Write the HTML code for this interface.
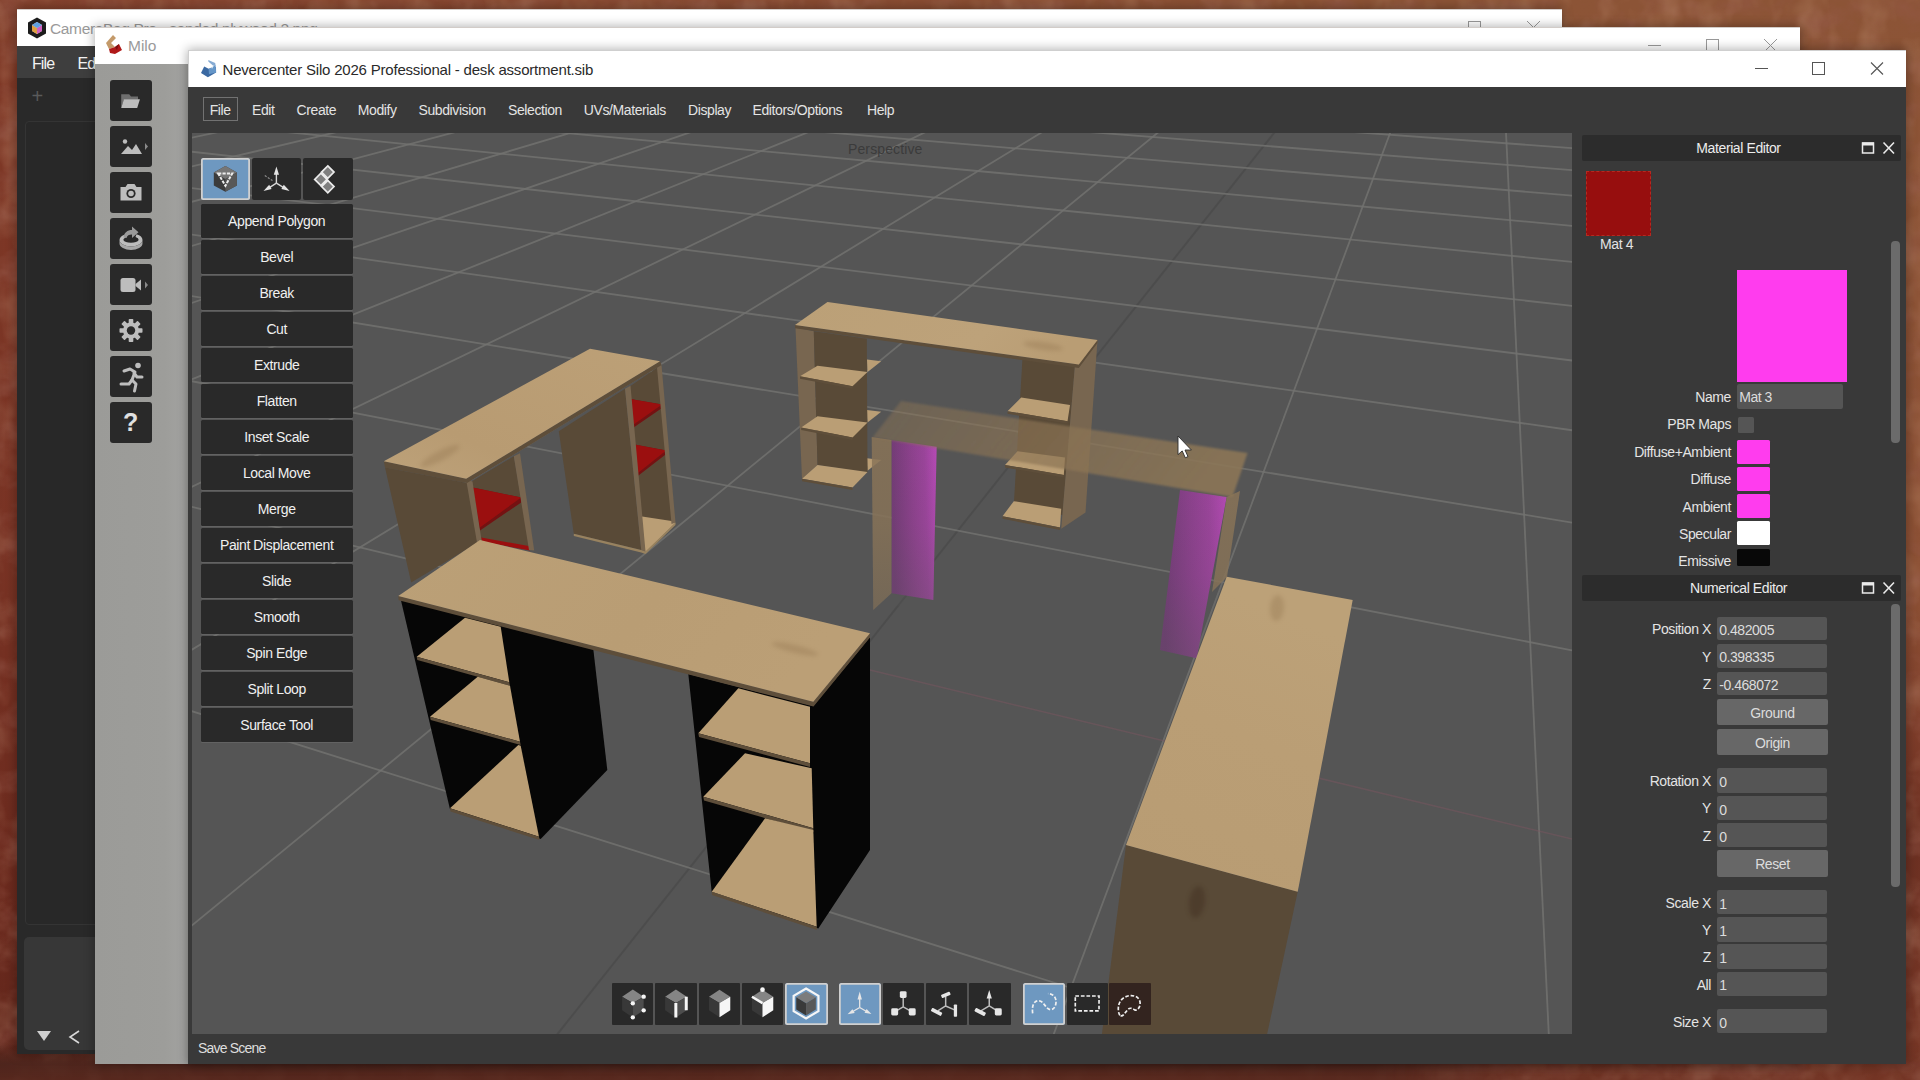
<!DOCTYPE html>
<html><head><meta charset="utf-8"><title>Nevercenter Silo 2026 Professional - desk assortment.sib</title>
<style>

html,body{margin:0;padding:0;}
body{width:1920px;height:1080px;overflow:hidden;position:relative;background:#8c4a31;font-family:"Liberation Sans",sans-serif;}
.abs{position:absolute;}
#desk{position:absolute;left:0;top:0;width:1920px;height:1080px;}
.win{position:absolute;box-shadow:0 0 10px 1px rgba(0,0,0,0.30);}
.tb{position:absolute;left:0;top:0;right:0;background:#fff;box-shadow:inset 0 1px 0 #d2ccc8;}
.t{position:absolute;white-space:pre;line-height:1;}
.silo .t{color:#e4e4e4;font-size:14px;letter-spacing:-0.4px;}
.tool{position:absolute;left:12.7px;width:152px;height:34px;background:#292929;border-radius:1.5px;color:#f0f0f0;font-size:14px;letter-spacing:-0.4px;text-align:center;line-height:34.5px;box-shadow:0 1px 0 rgba(110,110,110,0.55);}
.fld{position:absolute;background:#555555;border-radius:2px;color:#dcdcdc;font-size:14px;letter-spacing:-0.45px;line-height:26.5px;padding-left:2.5px;box-sizing:border-box;}
.btn{position:absolute;background:#676767;border-radius:2px;color:#dcdcdc;font-size:14px;letter-spacing:-0.4px;text-align:center;}
.lbl{position:absolute;text-align:right;color:#e4e4e4;font-size:14px;letter-spacing:-0.4px;white-space:pre;line-height:1;}
.hdr{position:absolute;background:#2c2c2c;border-radius:2px;}
.mb{position:absolute;left:15px;width:41.5px;height:41px;background:#292929;border-radius:3px;}
.bb{position:absolute;top:933px;height:42px;background:#292929;border-radius:1px;}
.sel{background:#6e98c0 !important;box-shadow:inset 0 0 0 1.8px #d0d0d0;border-radius:2.5px !important;}

</style></head><body>
<svg id="desk" width="1920" height="1080" viewBox="0 0 1920 1080">
<defs>
<linearGradient id="dgR" x1="0" y1="0" x2="0" y2="1"><stop offset="0" stop-color="#8c5436"/><stop offset="0.55" stop-color="#8c5034"/><stop offset="0.68" stop-color="#7d3c29"/><stop offset="0.78" stop-color="#6c3022"/><stop offset="1" stop-color="#783726"/></linearGradient>
<linearGradient id="dgL" x1="0" y1="0" x2="0" y2="1"><stop offset="0" stop-color="#84422d"/><stop offset="0.08" stop-color="#7e3826"/><stop offset="0.5" stop-color="#783324"/><stop offset="0.85" stop-color="#6a291d"/><stop offset="1" stop-color="#60261b"/></linearGradient>
<linearGradient id="dgLR" x1="0" y1="0" x2="1" y2="0"><stop offset="0" stop-color="#fff" stop-opacity="1"/><stop offset="0.12" stop-color="#fff" stop-opacity="0.85"/><stop offset="0.8" stop-color="#fff" stop-opacity="0"/></linearGradient>
<linearGradient id="dgBm" x1="0" y1="0" x2="1" y2="0"><stop offset="0" stop-color="#fff" stop-opacity="1"/><stop offset="0.72" stop-color="#fff" stop-opacity="1"/><stop offset="0.8" stop-color="#fff" stop-opacity="0.35"/><stop offset="1" stop-color="#fff" stop-opacity="0.1"/></linearGradient><mask id="mB"><rect width="1920" height="1080" fill="url(#dgBm)"/></mask><mask id="mL"><rect width="1920" height="1080" fill="url(#dgLR)"/></mask>
<linearGradient id="dgB" x1="0" y1="0" x2="0" y2="1"><stop offset="0" stop-color="#4e261d" stop-opacity="0"/><stop offset="0.965" stop-color="#4e261d" stop-opacity="0"/><stop offset="0.985" stop-color="#4c251d" stop-opacity="0.9"/><stop offset="1" stop-color="#55281e" stop-opacity="0.85"/></linearGradient>
<filter id="noise" x="0" y="0" width="100%" height="100%"><feTurbulence type="fractalNoise" baseFrequency="0.025 0.035" numOctaves="4" seed="11"/><feColorMatrix type="matrix" values="0 0 0 0 0.30  0 0 0 0 0.10  0 0 0 0 0.07  2.4 0 0 0 -1.05"/></filter>
<filter id="noise2" x="0" y="0" width="100%" height="100%"><feTurbulence type="fractalNoise" baseFrequency="0.035 0.025" numOctaves="3" seed="3"/><feColorMatrix type="matrix" values="0 0 0 0 0.62  0 0 0 0 0.36  0 0 0 0 0.23  0 2.4 0 0 -1.05"/></filter>
</defs>
<rect width="1920" height="1080" fill="url(#dgR)"/>
<rect width="1920" height="1080" fill="url(#dgL)" mask="url(#mL)"/>
<rect width="1920" height="1080" filter="url(#noise)" opacity="0.5"/>
<rect width="1920" height="1080" filter="url(#noise2)" opacity="0.25"/>
<rect width="1920" height="1080" fill="url(#dgB)" mask="url(#mB)"/>
</svg><div class="win" style="left:17px;top:9px;width:1545px;height:1045px;background:#2b2b2b;overflow:hidden"><div class="tb" style="height:37px"></div><svg class="abs" style="left:10px;top:8px" width="20" height="22" viewBox="0 0 20 22"><polygon points="10,0.5 19,5.5 19,16.5 10,21.5 1,16.5 1,5.5" fill="#1c1c1c"/><polygon points="10,5 15,8 15,14 10,17 5,14 5,8" fill="#d8d0c8"/><polygon points="10,11 15,8 15,14 10,17" fill="#d060c0"/><polygon points="10,11 5,8 5,14 10,17" fill="#e0a040"/><polygon points="10,5 15,8 10,11 5,8" fill="#60a0e0"/></svg><div class="t" style="left:33px;top:11.5px;font-size:15.5px;color:#9a9a9a;letter-spacing:-0.35px">CameraBag Pro - sanded plywood 2.png</div><div class="abs" style="left:0;top:37px;right:0;height:32px;background:#3e3e3e"></div><div class="abs" style="left:0;top:69px;right:0;bottom:0;background:#292929"></div><div class="t" style="left:15px;top:46.5px;font-size:16px;color:#f2f2f2;letter-spacing:-0.9px">File</div><div class="t" style="left:60.5px;top:46.5px;font-size:16px;color:#f2f2f2;letter-spacing:-0.9px">Edit</div><div class="t" style="left:14.5px;top:77px;font-size:20px;color:#5a5a5a">+</div><div class="abs" style="left:8px;top:112px;width:200px;height:802px;border:1px solid #343434;border-radius:4px;background:#282828"></div><div class="abs" style="left:7px;top:927.5px;width:200px;height:113.5px;border-radius:5px;background:#373737"></div><svg class="abs" style="left:19px;top:1019.5px" width="50" height="16" viewBox="0 0 50 16"><polygon points="1,2 15,2 8,12" fill="#d0d0d0"/><polyline points="43,2 34,8 43,14" fill="none" stroke="#d8d8d8" stroke-width="1.6"/></svg><svg class="abs" style="left:1440px;top:8px" width="100" height="20" viewBox="0 0 100 20"><rect x="11.5" y="4.5" width="12" height="12" fill="none" stroke="#999" stroke-width="1"/><path d="M70 4 L83 17 M83 4 L70 17" stroke="#999" stroke-width="1"/></svg></div><div class="win" style="left:95px;top:27px;width:1705px;height:1037px;background:#a2a2a2"><div class="tb" style="height:37px"></div><svg class="abs" style="left:10px;top:8px" width="18" height="20" viewBox="0 0 18 20"><polygon points="8,0 11,3 6,8 10,12 4,14 1,8" fill="#c49a6a"/><polygon points="4,14 10,12 14,9 17,15 10,19 5,18" fill="#b01818"/><polygon points="10,12 14,9 12,15" fill="#7a0f0f"/></svg><div class="t" style="left:33px;top:11px;font-size:15.5px;color:#9a9a9a">Milo</div><svg class="abs" style="left:1545px;top:8px" width="150" height="22" viewBox="0 0 150 22"><path d="M8 10.5 H21" stroke="#999" stroke-width="1"/><rect x="66.5" y="4.5" width="12" height="12" fill="none" stroke="#999" stroke-width="1"/><path d="M124 4 L137 17 M137 4 L124 17" stroke="#999" stroke-width="1"/></svg><div class="abs" style="left:0;top:37px;right:0;bottom:0;background:linear-gradient(90deg,#9b9b98,#9d9d9a 70px,#a2a2a0 88px,#9e9e9c 93px)"></div><div class="mb" style="top:52.50px"><svg width="42" height="41" viewBox="0 0 42 41"><path d="M11.2 14.2 h8 l1.8 2.3 h7 v3 h-14 l-2.8 8.6 z" fill="#6e6e6e"/><path d="M13.9 19.2 h16 l-2.7 8.9 h-16 z" fill="#bdbdbd"/></svg></div><div class="mb" style="top:98.75px"><svg width="42" height="41" viewBox="0 0 42 41"><path d="M11 28 l7 -8 4 4 4 -6 6 10 z" fill="#bdbdbd"/><circle cx="15" cy="15.5" r="2.2" fill="#bdbdbd"/><polygon points="35,17 38,20.5 35,24" fill="#8a8a8a"/></svg></div><div class="mb" style="top:145.00px"><svg width="42" height="41" viewBox="0 0 42 41"><path d="M10.5 15 h5 l2 -3 h7 l2 3 h5 v13.5 h-21 z" fill="#bdbdbd"/><circle cx="21" cy="21.5" r="4.6" fill="#2a2a2a"/><circle cx="21" cy="21.5" r="2.8" fill="#bdbdbd"/></svg></div><div class="mb" style="top:190.50px"><svg width="42" height="41" viewBox="0 0 42 41"><path d="M9.5 22 a11.5 6.5 0 0 0 23 0 a11.5 6.5 0 0 0 -6 -5.7 l-1 2.6 a8 3.8 0 0 1 3.2 3.1 a8 3.8 0 0 1 -15.4 0 a8 3.8 0 0 1 2.2 -2.6 l-1.2 -2.6 a11.5 6.5 0 0 0 -4.8 5.2 z" fill="#bdbdbd"/><path d="M9.5 22 v3.5 a11.5 6.5 0 0 0 23 0 v-3.5 a11.5 6.5 0 0 1 -23 0 z" fill="#a8a8a8"/><path d="M13.5 19.5 c0.5 -5 4 -7.5 8.5 -7.5 v-3.5 l6.5 5.8 -6.5 5.8 v-3.6 c-3 0 -5 1 -5.5 3.6 z" fill="#9a9a9a"/></svg></div><div class="mb" style="top:237.25px"><svg width="42" height="41" viewBox="0 0 42 41"><rect x="10.5" y="14" width="15" height="14" rx="2.5" fill="#bdbdbd"/><polygon points="25.5,20 31,15.5 31,26.5 25.5,22" fill="#bdbdbd"/><polygon points="35,17.5 38,21 35,24.5" fill="#8a8a8a"/></svg></div><div class="mb" style="top:283.00px"><svg width="42" height="41" viewBox="0 0 42 41"><g transform="translate(21 20.5)" fill="#bdbdbd"><circle r="8" /><g id="teeth"><rect x="-2.3" y="-11.5" width="4.6" height="23" rx="0.8"/><rect x="-2.3" y="-11.5" width="4.6" height="23" rx="0.8" transform="rotate(45)"/><rect x="-2.3" y="-11.5" width="4.6" height="23" rx="0.8" transform="rotate(90)"/><rect x="-2.3" y="-11.5" width="4.6" height="23" rx="0.8" transform="rotate(135)"/></g><circle r="4.2" fill="#2a2a2a"/></g></svg></div><div class="mb" style="top:328.75px"><svg width="42" height="41" viewBox="0 0 42 41"><g fill="none" stroke="#bdbdbd" stroke-width="3" stroke-linecap="round" stroke-linejoin="round"><path d="M14 15 l6 -2 5 3 -3 8 4 4 -1.5 7"/><path d="M22 24 l-3 4 h-8"/><path d="M24 17 l3 4 h5"/></g><circle cx="28" cy="9.5" r="2.8" fill="#bdbdbd"/></svg></div><div class="mb" style="top:375.00px"><div class="t" style="left:0;width:41.5px;text-align:center;top:8px;font-size:25px;font-weight:bold;color:#e0e0e0">?</div></div></div><div class="win silo" style="left:188px;top:50px;width:1718px;height:1014px;background:#393939;overflow:hidden"><div class="tb" style="height:37px;box-shadow:inset 1px 1px 0 #cfcfcf"></div><svg class="abs" style="left:11px;top:9px" width="20" height="20" viewBox="0 0 20 20"><polygon points="5.2,7.5 9.6,9.7 17,8 17.1,13.5 8.9,18.2 2,14.1" fill="#3b69a2"/><polygon points="9.6,9.9 16.6,6.3 17.1,13.5 10,15.2" fill="#6596c8"/><polygon points="9.3,0.9 16.2,4 16.7,7.2 13.9,6.4 9.3,2.6" fill="#86abd3"/><polygon points="12.4,8.6 13.6,8 14,9 12.8,9.6" fill="#e8eef5"/></svg><div class="t" style="left:34.5px;top:12.0px;font-size:15px;color:#2a2a2a;letter-spacing:-0.2px">Nevercenter Silo 2026 Professional - desk assortment.sib</div><svg class="abs" style="left:1560px;top:8px" width="150" height="22" viewBox="0 0 150 22"><path d="M7 10.5 H20" stroke="#555" stroke-width="1"/><rect x="64.5" y="4.5" width="12" height="12" fill="none" stroke="#555" stroke-width="1"/><path d="M123 4.5 L135 16.5 M135 4.5 L123 16.5" stroke="#555" stroke-width="1.1"/></svg><div class="abs" style="left:15px;top:47px;width:34.5px;height:23.5px;border:1px solid #727272;box-sizing:border-box"></div><div class="t" style="left:21.7px;top:53.0px;">File</div><div class="t" style="left:64.0px;top:53.0px;">Edit</div><div class="t" style="left:108.6px;top:53.0px;">Create</div><div class="t" style="left:169.8px;top:53.0px;">Modify</div><div class="t" style="left:230.5px;top:53.0px;">Subdivision</div><div class="t" style="left:320.0px;top:53.0px;">Selection</div><div class="t" style="left:395.8px;top:53.0px;">UVs/Materials</div><div class="t" style="left:500.0px;top:53.0px;">Display</div><div class="t" style="left:564.5px;top:53.0px;">Editors/Options</div><div class="t" style="left:679.0px;top:53.0px;">Help</div><svg class="abs" style="left:4px;top:83px" width="1380" height="901" viewBox="192 133 1380 901"><defs><filter id="blur1" x="-5%" y="-20%" width="110%" height="140%"><feGaussianBlur stdDeviation="1.1"/></filter><filter id="blur2" x="-50%" y="-50%" width="200%" height="200%"><feGaussianBlur stdDeviation="2.2"/></filter>
<linearGradient id="vbg" x1="0" y1="0" x2="0.3" y2="1"><stop offset="0" stop-color="#6e6e6e"/><stop offset="0.07" stop-color="#626262"/><stop offset="0.18" stop-color="#595959"/><stop offset="0.35" stop-color="#565656"/><stop offset="1" stop-color="#545454"/></linearGradient>
<linearGradient id="wood1" x1="0" y1="1" x2="1" y2="0"><stop offset="0" stop-color="#bda27a"/><stop offset="0.3" stop-color="#b89b72"/><stop offset="1" stop-color="#bca077"/></linearGradient>
<linearGradient id="wood2" x1="0" y1="0" x2="1" y2="0.2"><stop offset="0" stop-color="#bba077"/><stop offset="0.7" stop-color="#bda27a"/><stop offset="1" stop-color="#b99d74"/></linearGradient>
<linearGradient id="wood3" x1="0.3" y1="0" x2="0" y2="1"><stop offset="0" stop-color="#bca178"/><stop offset="0.4" stop-color="#ba9e75"/><stop offset="1" stop-color="#b89c73"/></linearGradient>
<linearGradient id="wood4" x1="0" y1="0" x2="1" y2="0.3"><stop offset="0" stop-color="#bba077"/><stop offset="0.6" stop-color="#b99d74"/><stop offset="1" stop-color="#bb9f76"/></linearGradient>
<linearGradient id="mag1" x1="0" y1="0.1" x2="1" y2="0"><stop offset="0" stop-color="#733c76"/><stop offset="0.45" stop-color="#8d418d"/><stop offset="0.72" stop-color="#9a449a"/><stop offset="1" stop-color="#b64ab6"/></linearGradient>
<linearGradient id="mag2" x1="0" y1="0.1" x2="1" y2="0"><stop offset="0" stop-color="#703c74"/><stop offset="0.45" stop-color="#8a418b"/><stop offset="0.72" stop-color="#984498"/><stop offset="1" stop-color="#b24ab2"/></linearGradient>
<linearGradient id="ghost" x1="0" y1="0" x2="1" y2="0.2"><stop offset="0" stop-color="#8c7454" stop-opacity="0.42"/><stop offset="0.4" stop-color="#8c7454" stop-opacity="0.62"/><stop offset="1" stop-color="#8c7656" stop-opacity="0.88"/></linearGradient><linearGradient id="fade" x1="0" y1="0" x2="0" y2="1"><stop offset="0" stop-color="#555" stop-opacity="0"/><stop offset="0.5" stop-color="#555" stop-opacity="0.05"/><stop offset="1" stop-color="#555" stop-opacity="0.3"/></linearGradient>
</defs><rect x="192" y="133" width="1380" height="901" fill="#555555"/><line x1="551.8" y1="-75.2" x2="-2500.8" y2="142.6" stroke="#727270" stroke-opacity="0.85" stroke-width="1.80"/><line x1="574.7" y1="-74.6" x2="-2498.9" y2="152.1" stroke="#727270" stroke-opacity="0.85" stroke-width="1.80"/><line x1="597.8" y1="-74.0" x2="-2496.9" y2="162.2" stroke="#727270" stroke-opacity="0.85" stroke-width="1.80"/><line x1="621.3" y1="-73.4" x2="-2494.7" y2="173.0" stroke="#727270" stroke-opacity="0.85" stroke-width="1.80"/><line x1="645.2" y1="-72.8" x2="-2492.4" y2="184.6" stroke="#727270" stroke-opacity="0.85" stroke-width="1.80"/><line x1="669.4" y1="-72.2" x2="-2489.9" y2="197.1" stroke="#727270" stroke-opacity="0.85" stroke-width="1.80"/><line x1="694.0" y1="-71.5" x2="-2487.2" y2="210.4" stroke="#727270" stroke-opacity="0.85" stroke-width="1.80"/><line x1="719.0" y1="-70.9" x2="-2484.3" y2="224.9" stroke="#727270" stroke-opacity="0.85" stroke-width="1.80"/><line x1="744.3" y1="-70.2" x2="-2481.2" y2="240.5" stroke="#727270" stroke-opacity="0.85" stroke-width="1.80"/><line x1="770.1" y1="-69.6" x2="-2477.8" y2="257.4" stroke="#727270" stroke-opacity="0.85" stroke-width="1.80"/><line x1="796.2" y1="-68.9" x2="-2474.1" y2="275.9" stroke="#727270" stroke-opacity="0.85" stroke-width="1.80"/><line x1="822.8" y1="-68.2" x2="-2470.0" y2="296.1" stroke="#727270" stroke-opacity="0.85" stroke-width="1.80"/><line x1="849.8" y1="-67.5" x2="-2465.6" y2="318.3" stroke="#727270" stroke-opacity="0.85" stroke-width="1.80"/><line x1="877.2" y1="-66.8" x2="-2460.7" y2="342.8" stroke="#727270" stroke-opacity="0.85" stroke-width="1.80"/><line x1="905.1" y1="-66.1" x2="-2455.3" y2="369.9" stroke="#727270" stroke-opacity="0.85" stroke-width="1.80"/><line x1="933.4" y1="-65.4" x2="-2449.2" y2="400.2" stroke="#727270" stroke-opacity="0.85" stroke-width="1.80"/><line x1="962.2" y1="-64.6" x2="-2442.4" y2="434.1" stroke="#727270" stroke-opacity="0.85" stroke-width="1.80"/><line x1="991.5" y1="-63.9" x2="-2434.7" y2="472.5" stroke="#727270" stroke-opacity="0.85" stroke-width="1.80"/><line x1="1021.3" y1="-63.1" x2="-2425.9" y2="516.2" stroke="#727270" stroke-opacity="0.85" stroke-width="1.80"/><line x1="1051.5" y1="-62.3" x2="-2415.9" y2="566.5" stroke="#727270" stroke-opacity="0.85" stroke-width="1.80"/><line x1="1082.3" y1="-61.5" x2="-2404.2" y2="624.9" stroke="#727270" stroke-opacity="0.85" stroke-width="1.80"/><line x1="1113.6" y1="-60.7" x2="-2390.4" y2="693.6" stroke="#727270" stroke-opacity="0.85" stroke-width="1.80"/><line x1="1145.5" y1="-59.9" x2="-2374.0" y2="775.5" stroke="#727270" stroke-opacity="0.85" stroke-width="1.80"/><line x1="1177.9" y1="-59.0" x2="-2354.1" y2="875.0" stroke="#727270" stroke-opacity="0.85" stroke-width="1.80"/><line x1="1210.9" y1="-58.2" x2="-2329.4" y2="998.2" stroke="#727270" stroke-opacity="0.85" stroke-width="1.80"/><line x1="1244.4" y1="-57.3" x2="-2298.0" y2="1154.9" stroke="#727270" stroke-opacity="0.85" stroke-width="1.80"/><line x1="1278.6" y1="-56.4" x2="-2256.7" y2="1360.8" stroke="#727270" stroke-opacity="0.85" stroke-width="1.80"/><line x1="1313.4" y1="-55.5" x2="-2200.1" y2="1643.5" stroke="#727270" stroke-opacity="0.85" stroke-width="1.80"/><line x1="1348.8" y1="-54.6" x2="-2117.5" y2="2055.7" stroke="#727270" stroke-opacity="0.85" stroke-width="1.80"/><line x1="1384.9" y1="-53.7" x2="-1985.8" y2="2713.0" stroke="#727270" stroke-opacity="0.85" stroke-width="1.80"/><line x1="1421.7" y1="-52.7" x2="-1742.6" y2="3926.4" stroke="#484848" stroke-opacity="0.70" stroke-width="2.00"/><line x1="1459.1" y1="-51.8" x2="-716.8" y2="5777.1" stroke="#727270" stroke-opacity="0.85" stroke-width="1.80"/><line x1="1497.3" y1="-50.8" x2="1765.4" y2="5600.2" stroke="#727270" stroke-opacity="0.85" stroke-width="1.80"/><line x1="1536.1" y1="-49.8" x2="4563.7" y2="6432.7" stroke="#727270" stroke-opacity="0.85" stroke-width="1.80"/><line x1="1575.8" y1="-48.8" x2="7122.0" y2="6214.8" stroke="#727270" stroke-opacity="0.85" stroke-width="1.80"/><line x1="1616.2" y1="-47.7" x2="9509.8" y2="6011.4" stroke="#727270" stroke-opacity="0.85" stroke-width="1.80"/><line x1="1657.4" y1="-46.7" x2="11743.6" y2="5821.1" stroke="#727270" stroke-opacity="0.85" stroke-width="1.80"/><line x1="1699.5" y1="-45.6" x2="13837.9" y2="5642.7" stroke="#727270" stroke-opacity="0.85" stroke-width="1.80"/><line x1="1742.3" y1="-44.5" x2="18370.2" y2="6481.8" stroke="#727270" stroke-opacity="0.85" stroke-width="1.80"/><line x1="1786.1" y1="-43.3" x2="20453.8" y2="6262.1" stroke="#727270" stroke-opacity="0.85" stroke-width="1.80"/><line x1="551.8" y1="-75.2" x2="1830.7" y2="-42.2" stroke="#727270" stroke-opacity="0.85" stroke-width="1.80"/><line x1="535.2" y1="-74.0" x2="1839.2" y2="-39.7" stroke="#727270" stroke-opacity="0.85" stroke-width="1.80"/><line x1="518.0" y1="-72.8" x2="1848.1" y2="-37.0" stroke="#727270" stroke-opacity="0.85" stroke-width="1.80"/><line x1="500.1" y1="-71.5" x2="1857.5" y2="-34.2" stroke="#727270" stroke-opacity="0.85" stroke-width="1.80"/><line x1="481.6" y1="-70.2" x2="1867.5" y2="-31.3" stroke="#727270" stroke-opacity="0.85" stroke-width="1.80"/><line x1="462.3" y1="-68.8" x2="1877.9" y2="-28.2" stroke="#727270" stroke-opacity="0.85" stroke-width="1.80"/><line x1="442.3" y1="-67.4" x2="1889.0" y2="-24.9" stroke="#727270" stroke-opacity="0.85" stroke-width="1.80"/><line x1="421.6" y1="-65.9" x2="1900.7" y2="-21.4" stroke="#727270" stroke-opacity="0.85" stroke-width="1.80"/><line x1="399.9" y1="-64.4" x2="1913.1" y2="-17.7" stroke="#727270" stroke-opacity="0.85" stroke-width="1.80"/><line x1="377.4" y1="-62.8" x2="1926.3" y2="-13.8" stroke="#727270" stroke-opacity="0.85" stroke-width="1.80"/><line x1="354.0" y1="-61.1" x2="1940.4" y2="-9.6" stroke="#727270" stroke-opacity="0.85" stroke-width="1.80"/><line x1="329.5" y1="-59.3" x2="1955.4" y2="-5.2" stroke="#727270" stroke-opacity="0.85" stroke-width="1.80"/><line x1="304.0" y1="-57.5" x2="1971.5" y2="-0.4" stroke="#727270" stroke-opacity="0.85" stroke-width="1.80"/><line x1="277.3" y1="-55.6" x2="1988.7" y2="4.7" stroke="#727270" stroke-opacity="0.85" stroke-width="1.80"/><line x1="249.4" y1="-53.6" x2="2007.2" y2="10.2" stroke="#727270" stroke-opacity="0.85" stroke-width="1.80"/><line x1="220.2" y1="-51.5" x2="2027.1" y2="16.1" stroke="#727270" stroke-opacity="0.85" stroke-width="1.80"/><line x1="189.6" y1="-49.4" x2="2048.7" y2="22.5" stroke="#727270" stroke-opacity="0.85" stroke-width="1.80"/><line x1="157.4" y1="-47.1" x2="2072.0" y2="29.4" stroke="#727270" stroke-opacity="0.85" stroke-width="1.80"/><line x1="123.7" y1="-44.7" x2="2097.4" y2="36.9" stroke="#727270" stroke-opacity="0.85" stroke-width="1.80"/><line x1="88.2" y1="-42.1" x2="2125.2" y2="45.1" stroke="#727270" stroke-opacity="0.85" stroke-width="1.80"/><line x1="50.8" y1="-39.5" x2="2155.6" y2="54.2" stroke="#727270" stroke-opacity="0.85" stroke-width="1.80"/><line x1="11.3" y1="-36.6" x2="2189.0" y2="64.1" stroke="#727270" stroke-opacity="0.85" stroke-width="1.80"/><line x1="-30.3" y1="-33.7" x2="2226.1" y2="75.1" stroke="#727270" stroke-opacity="0.85" stroke-width="1.80"/><line x1="-74.4" y1="-30.5" x2="2267.3" y2="87.3" stroke="#727270" stroke-opacity="0.85" stroke-width="1.80"/><line x1="-121.1" y1="-27.2" x2="2313.3" y2="100.9" stroke="#727270" stroke-opacity="0.85" stroke-width="1.80"/><line x1="-170.6" y1="-23.7" x2="2365.3" y2="116.3" stroke="#727270" stroke-opacity="0.85" stroke-width="1.80"/><line x1="-223.3" y1="-19.9" x2="2424.2" y2="133.8" stroke="#727270" stroke-opacity="0.85" stroke-width="1.80"/><line x1="-279.5" y1="-15.9" x2="2491.7" y2="153.8" stroke="#727270" stroke-opacity="0.85" stroke-width="1.80"/><line x1="-339.5" y1="-11.6" x2="2569.7" y2="177.0" stroke="#727270" stroke-opacity="0.85" stroke-width="1.80"/><line x1="-403.6" y1="-7.0" x2="2661.0" y2="204.0" stroke="#727270" stroke-opacity="0.85" stroke-width="1.80"/><line x1="-472.4" y1="-2.1" x2="2769.2" y2="236.1" stroke="#727270" stroke-opacity="0.85" stroke-width="1.80"/><line x1="-546.4" y1="3.1" x2="2899.4" y2="274.7" stroke="#727270" stroke-opacity="0.85" stroke-width="1.80"/><line x1="-626.2" y1="8.8" x2="3059.2" y2="322.1" stroke="#727270" stroke-opacity="0.85" stroke-width="1.80"/><line x1="-712.4" y1="15.0" x2="3260.0" y2="381.7" stroke="#727270" stroke-opacity="0.85" stroke-width="1.80"/><line x1="-806.0" y1="21.7" x2="3519.9" y2="458.7" stroke="#727270" stroke-opacity="0.85" stroke-width="1.80"/><line x1="-907.9" y1="28.9" x2="3869.4" y2="562.4" stroke="#727270" stroke-opacity="0.85" stroke-width="1.80"/><line x1="-1019.2" y1="36.9" x2="4364.6" y2="709.2" stroke="#727270" stroke-opacity="0.85" stroke-width="1.80"/><line x1="-1141.4" y1="45.6" x2="5120.4" y2="933.3" stroke="#727270" stroke-opacity="0.85" stroke-width="1.80"/><line x1="-1276.0" y1="55.2" x2="6416.0" y2="1317.5" stroke="#727270" stroke-opacity="0.85" stroke-width="1.80"/><line x1="-1425.2" y1="65.8" x2="9151.6" y2="2128.8" stroke="#727270" stroke-opacity="0.85" stroke-width="1.80"/><line x1="-1591.3" y1="77.7" x2="870.0" y2="670.1" stroke="#727270" stroke-opacity="0.85" stroke-width="1.80"/><line x1="870.0" y1="670.1" x2="18729.3" y2="4968.9" stroke="#7a5660" stroke-opacity="0.50" stroke-width="1.50"/><line x1="-1777.5" y1="91.0" x2="17706.7" y2="6226.6" stroke="#727270" stroke-opacity="0.85" stroke-width="1.80"/><line x1="-1987.6" y1="106.0" x2="12145.2" y2="6558.4" stroke="#727270" stroke-opacity="0.85" stroke-width="1.80"/><line x1="-2226.6" y1="123.0" x2="5350.8" y2="6444.9" stroke="#727270" stroke-opacity="0.85" stroke-width="1.80"/><polygon points="385.0,467.5 467.0,483.0 480.0,541.2 411.2,582.5" fill="#594a37" /><polygon points="472.0,481.2 513.8,456.2 530.0,550.0 481.2,541.2" fill="#594a37" /><polygon points="472.5,487.5 521.2,497.5 521.2,502.5 480.0,530.5 479.0,527.5" fill="#741212" /><polygon points="472.5,487.5 521.2,497.5 480.0,527.5" fill="#9b0f0f" /><polygon points="481.2,537.5 530.0,546.2 530.0,550.5 482.0,541.5" fill="#9b0f0f" /><polygon points="466.2,480.0 472.5,481.5 481.8,542.0 477.0,542.5" fill="#786650" /><polygon points="513.8,456.2 520.0,453.2 534.2,550.5 529.0,550.0" fill="#786650" /><polygon points="558.8,431.2 625.0,388.8 641.2,550.0 573.8,533.8" fill="#594a37" /><polygon points="630.0,386.2 657.5,367.5 672.5,522.5 643.8,547.5" fill="#594a37" /><polygon points="628.8,398.8 662.0,404.5 662.0,408.0 631.8,428.8 631.2,426.2" fill="#741212" /><polygon points="628.8,398.8 662.0,404.5 631.2,426.2" fill="#9b0f0f" /><polygon points="634.5,444.5 666.2,450.5 666.2,454.0 637.5,476.2 637.0,473.8" fill="#741212" /><polygon points="634.5,444.5 666.2,450.5 637.0,473.8" fill="#9b0f0f" /><polygon points="640.5,516.2 673.2,521.2 675.5,523.0 645.5,552.0 643.8,547.5" fill="#ba9e75" /><polygon points="625.0,388.8 630.5,385.8 645.5,551.5 641.2,550.0" fill="#786650" /><polygon points="657.0,367.5 661.5,365.0 675.5,522.5 671.5,524.0" fill="#786650" /><polygon points="573.8,533.8 641.2,550.0 645.5,551.5 675.5,522.5 675.5,525.0 645.5,554.0 641.2,552.5 573.8,536.0" fill="#98825f" /><polygon points="383.8,461.2 466.2,478.8 660.0,361.2 661.5,365.0 467.0,483.0 385.0,467.5" fill="#5e4e3a" /><polygon points="383.8,461.2 590.0,348.8 660.0,361.2 466.2,478.8" fill="url(#wood1)" /><polygon points="795.5,327.5 813.8,331.2 817.5,465.0 802.0,478.8" fill="#786650" /><polygon points="867.0,359.5 881.2,361.2 867.5,372.0" fill="#ba9e75" /><polygon points="867.0,410.0 881.2,411.8 867.5,422.5" fill="#ba9e75" /><polygon points="867.0,458.2 881.2,460.0 867.5,470.8" fill="#ba9e75" /><polygon points="813.8,331.2 866.8,338.8 867.5,472.5 817.5,465.0" fill="#594a37" /><polygon points="800.0,376.2 817.5,365.8 867.5,372.0 852.5,386.2" fill="#ba9e75" /><polygon points="801.2,427.5 817.5,416.2 867.5,422.5 852.5,437.5" fill="#ba9e75" /><polygon points="802.0,478.8 817.5,465.0 867.5,472.0 852.5,487.5" fill="#ba9e75" /><polygon points="800.0,376.2 852.5,386.2 852.5,388.8 800.0,378.8" fill="#5e4e3a" /><polygon points="801.2,427.5 852.5,437.5 852.5,440.0 801.2,430.0" fill="#5e4e3a" /><polygon points="802.0,478.8 852.5,487.5 852.5,490.0 802.0,481.2" fill="#5e4e3a" /><polygon points="1022.5,358.0 1075.0,365.0 1062.5,515.0 1013.8,505.0" fill="#594a37" /><polygon points="1007.5,411.2 1021.2,397.5 1070.0,405.0 1067.5,421.2" fill="#ba9e75" /><polygon points="1005.0,465.0 1017.5,451.2 1065.0,457.5 1063.8,475.0" fill="#ba9e75" /><polygon points="1002.5,516.2 1013.8,501.2 1061.2,508.8 1060.0,527.5" fill="#ba9e75" /><polygon points="1007.5,411.2 1067.5,421.2 1067.5,423.8 1007.5,413.8" fill="#5e4e3a" /><polygon points="1005.0,465.0 1063.8,475.0 1063.8,477.5 1005.0,467.5" fill="#5e4e3a" /><polygon points="1002.5,516.2 1060.0,527.5 1060.0,530.0 1002.5,518.8" fill="#5e4e3a" /><polygon points="1075.0,364.5 1097.5,340.0 1085.5,512.5 1061.2,528.8" fill="#786650" /><polygon points="795.0,325.0 1078.8,364.5 1097.5,340.0 1097.5,343.0 1078.8,368.0 795.0,328.2" fill="#5e4e3a" /><polygon points="795.0,325.0 827.5,302.0 1097.5,340.0 1078.8,364.5" fill="url(#wood2)" /><polygon points="871.7,437.0 891.7,440.0 891.7,593.0 873.3,610.0" fill="#8a7458" opacity="0.85"/><polygon points="891.7,440.0 936.7,446.7 933.3,600.0 891.7,593.3" fill="url(#mag1)" /><polygon points="1180.0,490.0 1226.7,497.0 1196.7,658.3 1160.0,650.0" fill="url(#mag2)" /><polygon points="1226.7,497.0 1240.0,491.0 1227.0,577.0 1212.0,592.0" fill="#8a7458" opacity="0.85"/><polygon points="871.7,437.0 936.7,446.7 933.3,600.0 873.3,610.0" fill="url(#fade)" /><polygon points="1180.0,490.0 1240.0,491.0 1227.0,577.0 1196.7,658.3 1160.0,650.0" fill="url(#fade)" /><polygon points="872.5,437.5 901.0,401.0 1247.5,453.0 1232.5,497.0" fill="url(#ghost)" filter="url(#blur1)"/><polygon points="1126.0,845.0 1297.7,891.7 1266.7,1036.0 1101.7,1036.0" fill="#594a37" /><polygon points="1226.7,576.7 1352.7,600.0 1297.7,891.7 1126.0,845.0" fill="url(#wood3)" /><polygon points="400.7,599.3 593.3,649.3 607.3,770.0 540.7,839.0 450.0,809.3" fill="#060606" /><polygon points="688.3,674.0 813.3,706.0 870.0,637.0 870.0,850.0 818.3,928.5 711.7,891.7" fill="#060606" /><polygon points="416.7,656.7 465.0,617.7 500.7,626.7 509.3,682.3" fill="#ba9e75" /><polygon points="416.7,656.7 509.3,682.3 510.0,685.7 417.3,660.0" fill="#5e4e3a" /><polygon points="430.0,716.7 477.7,676.7 510.0,685.7 520.0,741.7" fill="#ba9e75" /><polygon points="430.0,716.7 520.0,741.7 520.7,745.0 430.7,720.0" fill="#5e4e3a" /><polygon points="450.0,808.3 518.3,745.0 520.7,745.7 539.0,836.7" fill="#ba9e75" /><polygon points="450.0,808.3 539.0,836.7 539.5,840.0 450.5,811.5" fill="#5e4e3a" /><polygon points="698.3,733.3 738.3,688.3 810.0,706.7 810.0,763.3" fill="#ba9e75" /><polygon points="698.3,733.3 810.0,763.3 810.0,767.0 699.0,737.0" fill="#5e4e3a" /><polygon points="703.3,796.7 745.0,753.3 811.7,768.3 813.3,828.3" fill="#ba9e75" /><polygon points="703.3,796.7 813.3,828.3 813.5,832.0 704.0,800.5" fill="#5e4e3a" /><polygon points="711.7,891.7 765.0,818.3 813.3,830.0 816.7,926.7" fill="#ba9e75" /><polygon points="711.7,891.7 816.7,926.7 817.0,930.0 712.0,895.0" fill="#5e4e3a" /><polygon points="398.3,596.0 813.3,701.7 870.0,633.3 870.0,637.5 813.5,706.5 398.6,600.3" fill="#5e4e3a" /><polygon points="398.3,596.0 480.0,540.0 870.0,633.3 813.3,701.7" fill="url(#wood4)" /><ellipse cx="440.0" cy="456.0" rx="22.0" ry="5.0" transform="rotate(-28.0 440.0 456.0)" fill="#8c6e4a" opacity="0.30" filter="url(#blur2)"/><ellipse cx="1043.0" cy="346.0" rx="20.0" ry="4.0" transform="rotate(8.0 1043.0 346.0)" fill="#8c6e4a" opacity="0.30" filter="url(#blur2)"/><ellipse cx="795.0" cy="649.0" rx="24.0" ry="4.0" transform="rotate(14.0 795.0 649.0)" fill="#8c6e4a" opacity="0.30" filter="url(#blur2)"/><ellipse cx="1277.0" cy="608.0" rx="7.0" ry="13.0" transform="rotate(5.0 1277.0 608.0)" fill="#8c6e4a" opacity="0.30" filter="url(#blur2)"/><ellipse cx="1197.0" cy="902.0" rx="8.0" ry="16.0" transform="rotate(8.0 1197.0 902.0)" fill="#3c2c1e" opacity="0.40" filter="url(#blur2)"/><path d="M1178 436 L1178 454.6 L1182.2 450.9 L1185.3 457.8 L1188 456.6 L1185 450 L1191.4 450 Z" fill="#fff" stroke="#2a2a2a" stroke-width="0.9" stroke-linejoin="round"/></svg><div class="t" style="left:660.0px;top:92.0px;color:#3b3b3b;letter-spacing:0.12px">Perspective</div><div class="abs sel" style="left:12.7px;top:108px;width:49.3px;height:42px;border-radius:2px"><svg width="49" height="42" viewBox="0 0 49 42"><polygon points="24.4,8.1 35.9,14.5 35.9,27.4 24.4,33.8 12.8,27.4 12.8,14.5" fill="#3b3b3b"/><polygon points="24.4,8.1 35.9,14.5 24.4,21 12.8,14.5" fill="#767676"/><polygon points="24.4,21 35.9,14.5 35.9,27.4 24.4,33.8" fill="#585858"/><polygon points="17.1,15.4 31.2,15.4 24.4,27.8" fill="none" stroke="#ececec" stroke-width="2" stroke-dasharray="3.2 1.2"/></svg></div><div class="abs" style="left:63.7px;top:108px;width:49px;height:42px;background:#292929;border-radius:2px"><svg width="49" height="42" viewBox="0 0 49 42"><g stroke="#d8d8d8" stroke-width="1.4" fill="#e4e4e4"><path d="M24.4 25.2 V15"/><polygon points="24.4,8.5 27,16.8 21.8,16.8" stroke="none"/><path d="M24.4 25.2 L17 29.8"/><polygon points="11.5,33 17.2,26.8 19.6,31" stroke="none"/><path d="M24.4 25.2 L32 29.8"/><polygon points="37.6,33 31.8,26.8 29.4,31" stroke="none"/></g><path d="M12.8 17.5 L20.5 22.6" stroke="#8a8a8a" stroke-width="1.2" stroke-dasharray="2.2 1.4"/></svg></div><div class="abs" style="left:114.7px;top:108px;width:50px;height:42px;background:#292929;border-radius:2px"><svg width="50" height="42" viewBox="0 0 50 42"><g fill="#7e7e7e" stroke="#ececec" stroke-width="1.7"><polygon points="24.8,7.9 31,14.1 24.8,20.3 18.6,14.1"/><polygon points="17.9,15.2 24.1,21.4 17.9,27.6 11.7,21.4"/><polygon points="24.8,22.4 31,28.6 24.8,34.8 18.6,28.6"/></g></svg></div><div class="tool" style="top:153.5px">Append Polygon</div><div class="tool" style="top:189.5px">Bevel</div><div class="tool" style="top:225.5px">Break</div><div class="tool" style="top:261.5px">Cut</div><div class="tool" style="top:297.5px">Extrude</div><div class="tool" style="top:333.5px">Flatten</div><div class="tool" style="top:369.5px">Inset Scale</div><div class="tool" style="top:405.5px">Local Move</div><div class="tool" style="top:441.5px">Merge</div><div class="tool" style="top:477.5px">Paint Displacement</div><div class="tool" style="top:513.5px">Slide</div><div class="tool" style="top:549.5px">Smooth</div><div class="tool" style="top:585.5px">Spin Edge</div><div class="tool" style="top:621.5px">Split Loop</div><div class="tool" style="top:657.5px">Surface Tool</div><div class="t" style="left:10.0px;top:991.0px;color:#dedede;letter-spacing:-0.8px">Save Scene</div><div class="bb" style="left:423.7px;width:41.6px"><svg width="41.6" height="42" viewBox="0 0 42 42"><polygon points="21,6.3 32,13.6 21,20.1 10.2,13.6" fill="#858585"/><polygon points="10.2,13.6 21,20.1 21,34.7 10.2,27.4" fill="#383838"/><polygon points="21,20.1 32,13.6 32,27.4 21,34.7" fill="#4d4d4d"/><g fill="#f6f6f6"><circle cx="32" cy="13.6" r="2.2"/><circle cx="32" cy="27.4" r="2.2"/><circle cx="21" cy="34.5" r="2.2"/><circle cx="21" cy="20.3" r="2.2"/></g></svg></div><div class="bb" style="left:467.0px;width:41.7px"><svg width="41.7" height="42" viewBox="0 0 42 42"><polygon points="21,6.3 32,13.6 21,20.1 10.2,13.6" fill="#858585"/><polygon points="10.2,13.6 21,20.1 21,34.7 10.2,27.4" fill="#383838"/><polygon points="21,20.1 32,13.6 32,27.4 21,34.7" fill="#4d4d4d"/><path d="M21 20.1 V34.7 M31.5 13.8 V27.4" stroke="#f6f6f6" stroke-width="3"/></svg></div><div class="bb" style="left:511.0px;width:41.0px"><svg width="41.0" height="42" viewBox="0 0 42 42"><polygon points="21,6.3 32,13.6 21,20.1 10.2,13.6" fill="#858585"/><polygon points="10.2,13.6 21,20.1 21,34.7 10.2,27.4" fill="#383838"/><polygon points="21,20.1 32,13.6 32,27.4 21,34.7" fill="#4d4d4d"/><polygon points="21,20.1 32,13.6 32,27.4 21,34.7" fill="#f6f6f6"/></svg></div><div class="bb" style="left:554.3px;width:41.0px"><svg width="41.0" height="42" viewBox="0 0 42 42"><polygon points="21,6.3 32,13.6 21,20.1 10.2,13.6" fill="#858585"/><polygon points="10.2,13.6 21,20.1 21,34.7 10.2,27.4" fill="#383838"/><polygon points="21,20.1 32,13.6 32,27.4 21,34.7" fill="#4d4d4d"/><polygon points="21,20.1 32,13.6 32,27.4 21,34.7" fill="#f6f6f6"/><path d="M10.2 13.6 L21 20.1" stroke="#f6f6f6" stroke-width="2.6"/><circle cx="21" cy="6.3" r="2.4" fill="#f6f6f6"/></svg></div><div class="bb sel" style="left:597.0px;width:42.7px"><svg width="42.7" height="42" viewBox="0 0 42 42"><polygon points="20.7,5.5 33.1,12.8 33.1,28.1 20.7,35.4 8.3,28.1 8.3,12.8" fill="none" stroke="#f6f6f6" stroke-width="2.2"/><polygon points="20.7,8.5 30.5,14.3 20.7,20.3 10.9,14.3" fill="#7c7c7c"/><polygon points="10.9,14.3 20.7,20.3 20.7,32.4 10.9,26.6" fill="#3a3a3a"/><polygon points="20.7,20.3 30.5,14.3 30.5,26.6 20.7,32.4" fill="#595959"/></svg></div><div class="bb sel" style="left:651.0px;width:42.0px"><svg width="42.0" height="42" viewBox="0 0 42 42"><g stroke="#e6e6e6" stroke-width="1.3" fill="#e6e6e6"><path d="M20.7 24.5 V15"/><polygon points="20.7,8.5 22.9,16.5 18.5,16.5" stroke="none"/><path d="M20.7 24.5 L13 29"/><polygon points="8.6,31.3 13.5,26.2 15.7,30" stroke="none"/><path d="M20.7 24.5 L28 28.7"/><polygon points="32.4,31 27.6,25.9 25.5,29.7" stroke="none"/></g></svg></div><div class="bb" style="left:694.7px;width:41.6px"><svg width="41.6" height="42" viewBox="0 0 42 42"><g stroke="#bdbdbd" stroke-width="1.5" fill="#e6e6e6"><path d="M20.4 23.8 V14 M20.4 23.8 L12.5 28.5 M20.4 23.8 L28.5 28.5"/><rect x="17" y="8" width="6.8" height="7" rx="1.5" stroke="none"/><rect x="8.3" y="25.3" width="7" height="7.2" rx="1.5" stroke="none"/><rect x="26" y="25.3" width="7" height="7.2" rx="1.5" stroke="none"/></g></svg></div><div class="bb" style="left:738.0px;width:41.3px"><svg width="41.3" height="42" viewBox="0 0 42 42"><g stroke="#bdbdbd" stroke-width="1.5" fill="#e6e6e6"><path d="M20 23 V13 M20 23 L12 28 M20 23 L29 27"/><rect x="15.5" y="10" width="9.5" height="3.6" rx="0.8" stroke="none" transform="rotate(-22 20 12)"/><rect x="5" y="27" width="11.5" height="3.8" rx="0.8" stroke="none" transform="rotate(27 10.5 29)"/><rect x="28.3" y="21.5" width="3.3" height="12.5" rx="0.8" stroke="none"/></g></svg></div><div class="bb" style="left:781.3px;width:41.7px"><svg width="41.7" height="42" viewBox="0 0 42 42"><g stroke="#bdbdbd" stroke-width="1.5" fill="#e6e6e6"><path d="M20.4 23 V14 M20.4 23 L12 28 M20.4 23 L28.5 28"/><polygon points="20.4,7 23,15.5 17.8,15.5" stroke="none"/><rect x="5.5" y="27" width="11.5" height="3.8" rx="0.8" stroke="none" transform="rotate(27 11 29)"/><rect x="26" y="25.3" width="7" height="7.2" rx="1.5" stroke="none"/></g></svg></div><div class="bb sel" style="left:834.7px;width:42.3px"><svg width="42.3" height="42" viewBox="0 0 42 42"><path d="M9.5 30.3 C8.5 22 11 17.5 16 17.8 C21 18 22.5 27 28 26.6 C33 26 35 16 30 12.3 C28.5 11 26.5 10.6 24.8 10.6" fill="none" stroke="#f0f0f0" stroke-width="1.7" stroke-dasharray="3.6 1.8"/></svg></div><div class="bb" style="left:878.7px;width:41.0px"><svg width="41.0" height="42" viewBox="0 0 42 42"><rect x="8.5" y="12.8" width="24.3" height="15.3" fill="none" stroke="#f0f0f0" stroke-width="1.7" stroke-dasharray="3.8 1.9"/></svg></div><div class="bb" style="left:921.3px;width:41.7px;background:#33241f"><svg width="41.7" height="42" viewBox="0 0 42 42"><path d="M10.9 32.5 C8 27 9 18 15.3 14.5 C21 11 29 12 31 18 C32.5 23 29 28 26 27 C23.5 25.5 21 24 18.5 27 C16 30 14 34.5 10.9 32.5 Z" fill="none" stroke="#f0f0f0" stroke-width="1.7" stroke-dasharray="3.6 1.8"/></svg></div><div class="hdr" style="left:1394.0px;top:85.0px;width:319px;height:26.0px"></div><div class="t" style="left:1391.0px;top:90.5px;width:319px;text-align:center;color:#ececec">Material Editor</div><svg class="abs" style="left:1673.0px;top:91.0px" width="36" height="14" viewBox="0 0 36 14"><rect x="1.5" y="2" width="11" height="10" fill="none" stroke="#eaeaea" stroke-width="1.5"/><rect x="1" y="1.5" width="12" height="3" fill="#eaeaea"/><path d="M22.5 1.5 L33 12.5 M33 1.5 L22.5 12.5" stroke="#eaeaea" stroke-width="1.6"/></svg><div class="abs" style="left:1397.5px;top:120.5px;width:65px;height:65px;background:#970e0e;border:1px dashed #b52a20;box-sizing:border-box"></div><div class="t" style="left:1412.0px;top:187.0px;">Mat 4</div><div class="abs" style="left:1548.7px;top:220.0px;width:110px;height:112px;background:#ff3cee"></div><div class="lbl" style="left:1383.0px;width:160px;top:339.5px">Name</div><div class="fld" style="left:1548.7px;top:334.0px;width:106.5px;height:24.5px">Mat 3</div><div class="lbl" style="left:1383.0px;width:160px;top:366.5px">PBR Maps</div><div class="abs" style="left:1550.0px;top:367.0px;width:16px;height:16px;background:#555;border-radius:1.5px"></div><div class="abs" style="left:1548.7px;top:389.5px;width:33.8px;height:24.2px;background:#ff3cee;border-radius:1.5px"></div><div class="lbl" style="left:1383.0px;width:160px;top:394.8px">Diffuse+Ambient</div><div class="abs" style="left:1548.7px;top:417.0px;width:33.8px;height:23.7px;background:#ff3cee;border-radius:1.5px"></div><div class="lbl" style="left:1383.0px;width:160px;top:422.3px">Diffuse</div><div class="abs" style="left:1548.7px;top:444.2px;width:33.8px;height:23.8px;background:#ff3cee;border-radius:1.5px"></div><div class="lbl" style="left:1383.0px;width:160px;top:449.5px">Ambient</div><div class="abs" style="left:1548.7px;top:471.2px;width:33.8px;height:23.8px;background:#ffffff;border-radius:1.5px"></div><div class="lbl" style="left:1383.0px;width:160px;top:476.5px">Specular</div><div class="abs" style="left:1548.7px;top:498.7px;width:33.8px;height:17.0px;background:#080808;border-radius:1.5px"></div><div class="lbl" style="left:1383.0px;width:160px;top:504.0px">Emissive</div><div class="abs" style="left:1702.5px;top:190.7px;width:9px;height:202px;background:#6b6b6b;border-radius:4px"></div><div class="hdr" style="left:1394.0px;top:525.0px;width:319px;height:26.0px"></div><div class="t" style="left:1391.0px;top:530.5px;width:319px;text-align:center;color:#ececec">Numerical Editor</div><svg class="abs" style="left:1673.0px;top:531.0px" width="36" height="14" viewBox="0 0 36 14"><rect x="1.5" y="2" width="11" height="10" fill="none" stroke="#eaeaea" stroke-width="1.5"/><rect x="1" y="1.5" width="12" height="3" fill="#eaeaea"/><path d="M22.5 1.5 L33 12.5 M33 1.5 L22.5 12.5" stroke="#eaeaea" stroke-width="1.6"/></svg><div class="abs" style="left:1702.5px;top:553.7px;width:9px;height:283px;background:#6b6b6b;border-radius:4px"></div><div class="fld" style="left:1528.7px;top:566.7px;width:110.3px;height:23.8px;line-height:27.8px">0.482005</div><div class="lbl" style="left:1363.0px;width:160px;top:572.1px">Position X</div><div class="fld" style="left:1528.7px;top:594.2px;width:110.3px;height:23.8px;line-height:27.8px">0.398335</div><div class="lbl" style="left:1363.0px;width:160px;top:599.6px">Y</div><div class="fld" style="left:1528.7px;top:621.7px;width:110.3px;height:23.8px;line-height:27.8px">-0.468072</div><div class="lbl" style="left:1363.0px;width:160px;top:627.1px">Z</div><div class="fld" style="left:1528.7px;top:718.0px;width:110.3px;height:24.5px;line-height:28.5px">0</div><div class="lbl" style="left:1363.0px;width:160px;top:723.8px">Rotation X</div><div class="fld" style="left:1528.7px;top:745.5px;width:110.3px;height:24.5px;line-height:28.5px">0</div><div class="lbl" style="left:1363.0px;width:160px;top:751.2px">Y</div><div class="fld" style="left:1528.7px;top:773.0px;width:110.3px;height:24.0px;line-height:28.0px">0</div><div class="lbl" style="left:1363.0px;width:160px;top:778.5px">Z</div><div class="fld" style="left:1528.7px;top:840.0px;width:110.3px;height:24.3px;line-height:28.3px">1</div><div class="lbl" style="left:1363.0px;width:160px;top:845.6px">Scale X</div><div class="fld" style="left:1528.7px;top:867.3px;width:110.3px;height:24.4px;line-height:28.4px">1</div><div class="lbl" style="left:1363.0px;width:160px;top:873.0px">Y</div><div class="fld" style="left:1528.7px;top:894.3px;width:110.3px;height:24.7px;line-height:28.7px">1</div><div class="lbl" style="left:1363.0px;width:160px;top:900.1px">Z</div><div class="fld" style="left:1528.7px;top:922.3px;width:110.3px;height:23.7px;line-height:27.7px">1</div><div class="lbl" style="left:1363.0px;width:160px;top:927.6px">All</div><div class="fld" style="left:1528.7px;top:959.0px;width:110.3px;height:24.3px;line-height:28.3px">0</div><div class="lbl" style="left:1363.0px;width:160px;top:964.6px">Size X</div><div class="btn" style="left:1528.7px;top:648.7px;width:111.5px;height:26.3px;line-height:28.3px">Ground</div><div class="btn" style="left:1528.7px;top:678.7px;width:111.5px;height:26.3px;line-height:28.3px">Origin</div><div class="btn" style="left:1528.7px;top:800.0px;width:111.5px;height:26.7px;line-height:28.7px">Reset</div></div>
</body></html>
